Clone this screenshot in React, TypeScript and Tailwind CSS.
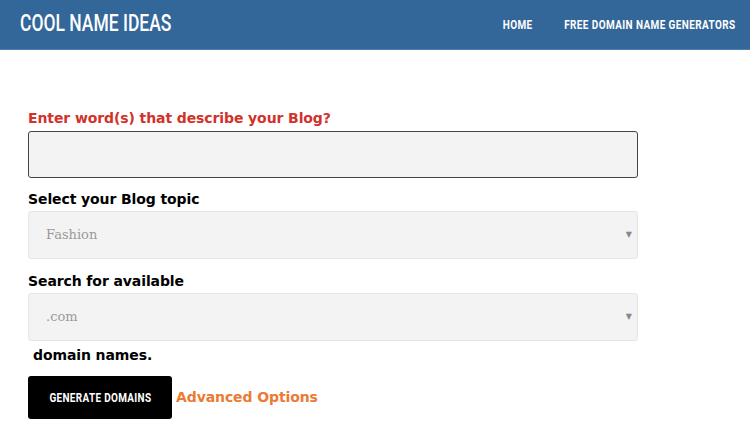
import { ChangeEvent, useState } from 'react'

// no condensed face installed, so Roboto gets squeezed to stand in for Oswald
const condensed = { fontFamily: 'Roboto, "Liberation Sans", sans-serif' }
const verdana = { fontFamily: '"DejaVu Sans", Verdana, sans-serif' }
const serif = { fontFamily: '"DejaVu Serif", Georgia, serif' }

function SelectBox({ value, options }: { value: string; options: string[] }) {
    const [v, setV] = useState(value)
    return (
        <div className="relative w-[610px] h-[48px]">
            <select
                value={v}
                onChange={(e: ChangeEvent<HTMLSelectElement>) => setV(e.target.value)}
                style={serif}
                className="appearance-none w-full h-[48px] bg-[#f3f3f3] border border-[#e6e6e6] rounded-[3px] pl-[17px] text-[13px] text-[#9a9a9a] outline-none"
            >
                {options.map((o) => (
                    <option key={o}>{o}</option>
                ))}
            </select>
            <span className="pointer-events-none absolute right-[6px] top-1/2 -translate-y-1/2 text-[8px] text-[#888]">▼</span>
        </div>
    )
}

export default function App() {
    return (
        <div className="min-h-[443px] bg-white">
            <header className="h-[50px] bg-[#336699] border-b border-[#4d7fb3] flex items-center justify-between pl-[20px] pr-[14px]">
                <div style={condensed} className="text-white text-[23px] font-medium origin-left scale-x-[0.76] whitespace-nowrap">
                    COOL NAME IDEAS
                </div>
                <nav style={condensed} className="flex gap-[38px] text-white text-[12px] font-bold tracking-[0.5px] pt-[1px] origin-right scale-x-[0.83] whitespace-nowrap">
                    <a>HOME</a>
                    <a>FREE DOMAIN NAME GENERATORS</a>
                </nav>
            </header>

            <main className="pl-[28px] pt-[58px]" style={verdana}>
                <label className="block text-[14px] font-bold tracking-[-0.1px] text-[#d1322b] leading-[20px]">Enter word(s) that describe your Blog?</label>
                <input className="mt-[3px] block w-[610px] h-[47px] bg-[#f3f3f3] border border-[#444] rounded-[3px] outline-none" />

                <label className="block mt-[11px] text-[14px] font-bold tracking-[-0.1px] text-black leading-[20px]">Select your Blog topic</label>
                <div className="mt-[2px]">
                    <SelectBox value="Fashion" options={['Fashion', 'Travel', 'Food', 'Technology']} />
                </div>

                <label className="block mt-[12px] text-[14px] font-bold tracking-[-0.1px] text-black leading-[20px]">Search for available</label>
                <div className="mt-[2px]">
                    <SelectBox value=".com" options={['.com', '.net', '.org']} />
                </div>

                <div className="mt-[4px] pl-[5px] text-[14px] font-bold tracking-[-0.1px] text-black leading-[20px]">domain names.</div>

                <div className="mt-[11px] flex items-center gap-[4px]">
                    <button className="w-[144px] h-[43px] bg-black text-white rounded-[3px] flex items-center justify-center">
                        <span style={condensed} className="text-[12px] font-bold tracking-[0.4px] scale-x-[0.83] whitespace-nowrap">
                            GENERATE DOMAINS
                        </span>
                    </button>
                    <a className="text-[14px] font-bold tracking-[-0.1px] text-[#ec7a33]">Advanced Options</a>
                </div>
            </main>
        </div>
    )
}
